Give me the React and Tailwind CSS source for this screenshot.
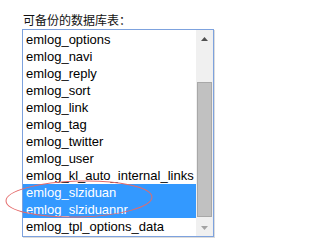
import React from "react";

const items = [
  "emlog_options",
  "emlog_navi",
  "emlog_reply",
  "emlog_sort",
  "emlog_link",
  "emlog_tag",
  "emlog_twitter",
  "emlog_user",
  "emlog_kl_auto_internal_links",
  "emlog_slziduan",
  "emlog_slziduannr",
  "emlog_tpl_options_data",
];
const selected = new Set(["emlog_slziduan", "emlog_slziduannr"]);

export default function App() {
  return (
    <div className="relative w-[280px] h-[247px] bg-white overflow-hidden">
      <div className="pt-[12px] pl-[22px]">
        <div
          className="pl-[1px] text-[12px] leading-[16px] text-[#111]"
          style={{ fontFamily: '"Noto Sans CJK SC", "Noto Sans", sans-serif' }}
        >
          可备份的数据库表：
        </div>
        <div
          className="mt-[1px] flex w-[192px] h-[208px] border border-[#7da2de] shadow-[1px_1px_0_#dcdcdc]"
          style={{ fontFamily: '"Liberation Sans", Arial, sans-serif' }}
        >
          <div className="flex-1 pt-[1px] overflow-hidden">
            {items.map((it) => (
              <div
                key={it}
                className={
                  "h-[17px] pl-[3px] text-[13px] leading-[17px] whitespace-nowrap overflow-hidden " +
                  (selected.has(it) ? "bg-[#3399ff] text-white" : "text-black")
                }
              >
                {it}
              </div>
            ))}
          </div>
          <div className="w-[17px] bg-[#f0f0f0] flex flex-col">
            <div className="h-[17px] flex items-center justify-center">
              <svg width="7" height="4" viewBox="0 0 7 4">
                <polygon points="3.5,0 7,4 0,4" fill="#505050" />
              </svg>
            </div>
            <div className="flex-1 flex flex-col px-[1px]">
              <div className="h-[35px]" />
              <div className="flex-1 mb-[2px] bg-[#c1c1c1] border border-[#a8a8a8]" />
            </div>
            <div className="h-[17px] flex items-center justify-center">
              <svg width="7" height="4" viewBox="0 0 7 4">
                <polygon points="0,0 7,0 3.5,4" fill="#a3a3a3" />
              </svg>
            </div>
          </div>
        </div>
      </div>
      <svg
        className="absolute left-0 top-0 pointer-events-none"
        width="280"
        height="247"
        viewBox="0 0 280 247"
      >
        <ellipse
          cx="79"
          cy="199"
          rx="73"
          ry="18"
          transform="rotate(-1.5 79 199)"
          fill="none"
          stroke="#e46a6a"
          strokeWidth="1"
        />
      </svg>
    </div>
  );
}
